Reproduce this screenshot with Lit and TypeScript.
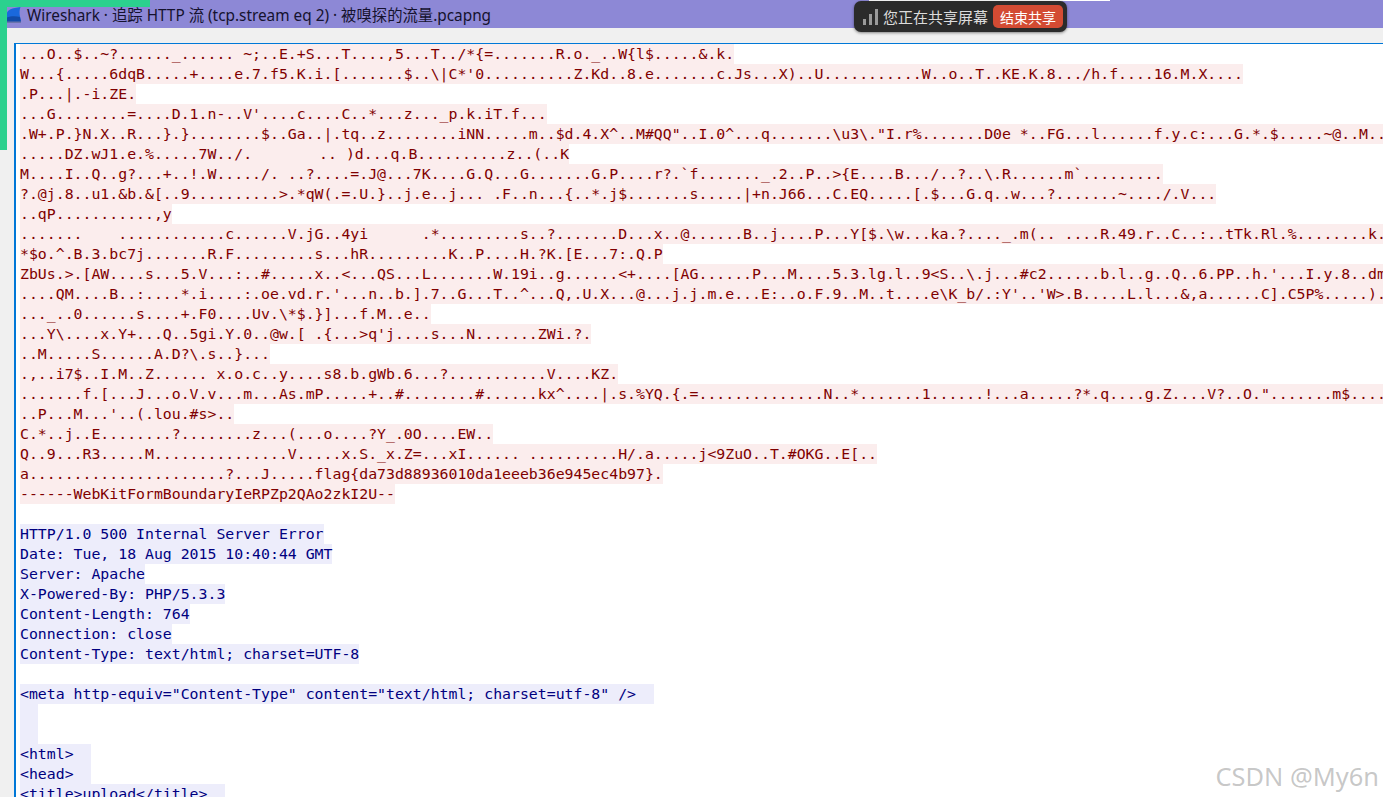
import { LitElement, html, css } from "lit";
import { customElement } from "lit/decorators.js";

const client: unknown[] = [
  `...O..$..~?......_...... ~;..E.+S...T....,5...T../*{=.......R.o._..W{l$.....&.k.`,
  `W...{.....6dqB.....+....e.7.f5.K.i.[.......$..\\|C*'0..........Z.Kd..8.e.......c.Js...X)..U...........W..o..T..KE.K.8.../h.f....16.M.X....`,
  `.P...|.-i.ZE.`,
  `...G........=....D.1.n-..V'....c....C..*...z..._p.k.iT.f...`,
  `.W+.P.}N.X..R...}.}........$..Ga..|.tq..z........iNN.....m..$d.4.X^..M#QQ"..I.0^...q.......\\u3\\."I.r%.......D0e *..FG...l......f.y.c:...G.*.$.....~@..M...`,
  html`.....DZ.wJ1.e.%.....7W../.       <span class="gap"></span>.. )d...q.B..........z..(..K`,
  `M....I..Q..g?...+..!.W...../. ..?....=.J@...7K....G.Q...G.......G.P....r?.\`f......._.2..P..>{E....B.../..?..\\.R......m\`.........`,
  `?.@j.8..u1.&b.&[..9..........>.*qW(.=.U.}..j.e..j... .F..n...{..*.j$.......s.....|+n.J66...C.EQ.....[.$...G.q..w...?.......~..../.V...`,
  `..qP...........,y`,
  `.......    ............c......V.jG..4yi      .*.........s..?.......D...x..@......B..j....P...Y[$.\\w...ka.?...._.m(.. ....R.49.r..C..:..tTk.Rl.%........k.`,
  `*$o.^.B.3.bc7j.......R.F.........s...hR.........K..P....H.?K.[E...7:.Q.P`,
  `ZbUs.>.[AW....s...5.V...:..#.....x..<...QS...L.......W.19i..g......<+....[AG......P...M....5.3.lg.l..9<S..\\.j...#c2......b.l..g..Q..6.PP..h.'...I.y.8..dm`,
  `....QM....B..:....*.i....:.oe.vd.r.'...n..b.].7..G...T..^...Q,.U.X...@...j.j.m.e...E:..o.F.9..M..t....e\\K_b/.:Y'..'W>.B.....L.l...&,a......C].C5P%.....).`,
  `..._..0......s....+.F0....Uv.\\*$.}]...f.M..e..`,
  `...Y\\....x.Y+...Q..5gi.Y.0..@w.[ .{...>q'j....s...N.......ZWi.?.`,
  `..M.....S......A.D?\\.s..}...`,
  `.,..i7$..I.M..Z...... x.o.c..y....s8.b.gWb.6...?...........V....KZ.`,
  `.......f.[...J...o.V.v...m...As.mP.....+..#........#......kx^....|.s.%YQ.{.=..............N..*.......1......!...a.....?*.q....g.Z....V?..O.".......m$.....`,
  `..P...M...'..(.lou.#s>..`,
  `C.*..j..E........?........z...(...o....?Y_.0O....EW..`,
  `Q..9...R3.....M...............V.....x.S._x.Z=...xI...... ..........H/.a.....j<9ZuO..T.#OKG..E[..`,
  `a......................?...J.....flag{da73d88936010da1eeeb36e945ec4b97}.`,
  `------WebKitFormBoundaryIeRPZp2QAo2zkI2U--`,
];

const server: string[] = [
  `HTTP/1.0 500 Internal Server Error`,
  `Date: Tue, 18 Aug 2015 10:40:44 GMT`,
  `Server: Apache`,
  `X-Powered-By: PHP/5.3.3`,
  `Content-Length: 764`,
  `Connection: close`,
  `Content-Type: text/html; charset=UTF-8`,
  ``,
  `<meta http-equiv="Content-Type" content="text/html; charset=utf-8" />  `,
  `  `,
  `  `,
  `<html>  `,
  `<head>  `,
  `<title>upload</title>  `,
];

@customElement("app-root")
export class AppRoot extends LitElement {
  static styles = css`
    :host {
      display: block;
      position: relative;
      width: 1383px;
      height: 797px;
      overflow: hidden;
      background: #f0f0f0;
    }
    .titlebar {
      height: 28px;
      background: #8d88d6;
      display: flex;
      align-items: center;
      gap: 6px;
      padding: 0 0 1px 7px;
      box-sizing: border-box;
      font: 15.35px "Noto Sans", "Noto Sans CJK SC", sans-serif;
      color: #15122e;
      white-space: nowrap;
    }
    .logo {
      width: 14px;
      height: 16px;
      flex: none;
      margin-top: 3px;
    }
    .stream {
      margin: 15px 0 0 14px;
      height: 754px;
      background: #fff;
      border-top: 1px solid #0078d7;
      border-left: 2px solid #0078d7;
      padding-left: 4px;
      overflow: hidden;
      font: 14.83px/20px "DejaVu Sans Mono", monospace;
    }
    .row {
      height: 20px;
      width: max-content;
      white-space: pre;
    }
    .gap {
      display: inline-block;
      width: 4.5px;
    }
    .client {
      background: #fbeded;
      color: #7f0000;
    }
    .server {
      background: #ededfb;
      color: #00007f;
    }
    .empty {
      background: transparent;
    }
    .edge-h {
      position: absolute;
      left: 0;
      top: 0;
      width: 150px;
      height: 7px;
      background: #2bd18e;
    }
    .edge-v {
      position: absolute;
      left: 0;
      top: 0;
      width: 7px;
      height: 150px;
      background: #2bd18e;
    }
    .edge-w {
      position: absolute;
      left: 869px;
      top: 0;
      width: 241px;
      height: 1px;
      background: #fff;
    }
    .share {
      position: absolute;
      left: 854px;
      top: 1px;
      width: 213px;
      height: 31px;
      box-sizing: border-box;
      padding: 0 4px 0 9px;
      display: flex;
      align-items: center;
      gap: 5px;
      background: #2b2b2b;
      border-radius: 7px;
      box-shadow: 0 1px 3px rgba(0, 0, 0, 0.45);
      font: 15px "Noto Sans CJK SC", sans-serif;
      color: #dcdcdc;
      white-space: nowrap;
    }
    .bars {
      width: 15px;
      height: 16px;
      flex: none;
    }
    .stop {
      width: 70px;
      height: 23px;
      line-height: 25px;
      text-align: center;
      font-size: 14px;
      background: #d34b33;
      border-radius: 5px;
      color: #fff;
    }
    .mark {
      position: absolute;
      right: 4px;
      bottom: 4px;
      font: 25.4px "Noto Sans", sans-serif;
      color: rgba(120, 120, 120, 0.42);
      white-space: nowrap;
    }
  `;

  render() {
    return html`
      <div class="titlebar">
        <svg class="logo" viewBox="0 0 14 16">
          <path d="M0 15V6.5C0 3 5 1 13.5 0c-1.2 3-1.2 6.5-.5 9.5l1 5.500z" fill="#1a68dc" />
          <path d="M0 15V10.500c3.500-1.500 9-1.500 13-.5l1 5z" fill="#124ba8" />
          <rect x="0" y="14.500" width="14" height="1.500" fill="#6a74ad" />
        </svg>
        <span>Wireshark · 追踪 HTTP 流 (tcp.stream eq 2) · 被嗅探的流量.pcapng</span>
      </div>
      <div class="stream">
        ${client.map((l) => html`<div class="row client">${l}</div>`)}
        <div class="row empty"></div>
        ${server.map(
          (l) => html`<div class="row ${l === "" ? "empty" : "server"}">${l}</div>`
        )}
      </div>
      <div class="edge-h"></div>
      <div class="edge-v"></div>
      <div class="edge-w"></div>
      <div class="share">
        <svg class="bars" viewBox="0 0 15 16">
          <rect x="0" y="10" width="3" height="6" fill="#9a9a9a" />
          <rect x="6" y="5" width="3" height="11" fill="#9a9a9a" />
          <rect x="12" y="0" width="3" height="16" fill="#9a9a9a" />
        </svg>
        <span>您正在共享屏幕</span>
        <div class="stop">结束共享</div>
      </div>
      <div class="mark">CSDN @My6n</div>
    `;
  }
}
